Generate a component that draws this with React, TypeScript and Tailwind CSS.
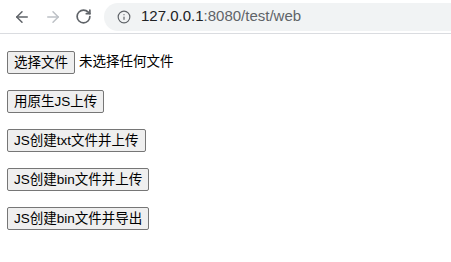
import { ArrowLeft, ArrowRight, RotateCw, Info } from "lucide-react";

const buttons = ["用原生JS上传", "JS创建txt文件并上传", "JS创建bin文件并上传", "JS创建bin文件并导出"];

function PageButton({ label }: { label: string }) {
  return (
    <button className="h-[23px] rounded-[2px] border border-[#767676] bg-[#efefef] px-[6px] text-[13.5px] leading-[18px] text-black">
      {label}
    </button>
  );
}

export default function App() {
  return (
    <div
      className="h-[262px] w-[451px] overflow-hidden bg-white"
      style={{ fontFamily: '"Liberation Sans", Arial, "Noto Sans CJK SC", sans-serif' }}
    >
      <div className="flex h-[34px] items-center border-b border-[#dadce0] bg-white">
        <div className="flex w-[104px] items-center gap-[13px] pl-[13px]">
          <ArrowLeft size={18} strokeWidth={2} className="text-[#5f6368]" />
          <ArrowRight size={18} strokeWidth={2} className="text-[#bdc1c6]" />
          <RotateCw size={17} strokeWidth={2.4} className="text-[#5f6368]" />
        </div>
        <div className="flex h-[28px] flex-1 items-center rounded-l-full bg-[#f1f3f4] pl-[13px]">
          <Info size={14} strokeWidth={2} className="text-[#5f6368]" />
          <span className="ml-[10px] text-[15px] text-[#202124]">
            127.0.0.1<span className="text-[#5f6368]">:8080/test/web</span>
          </span>
        </div>
      </div>
      <div className="flex flex-col items-start gap-[16px] pl-[7px] pt-[17px]">
        <div className="flex items-center gap-[4px] text-[13.5px] text-black">
          <PageButton label="选择文件" />
          <span>未选择任何文件</span>
        </div>
        {buttons.map((label) => (
          <PageButton key={label} label={label} />
        ))}
      </div>
    </div>
  );
}
